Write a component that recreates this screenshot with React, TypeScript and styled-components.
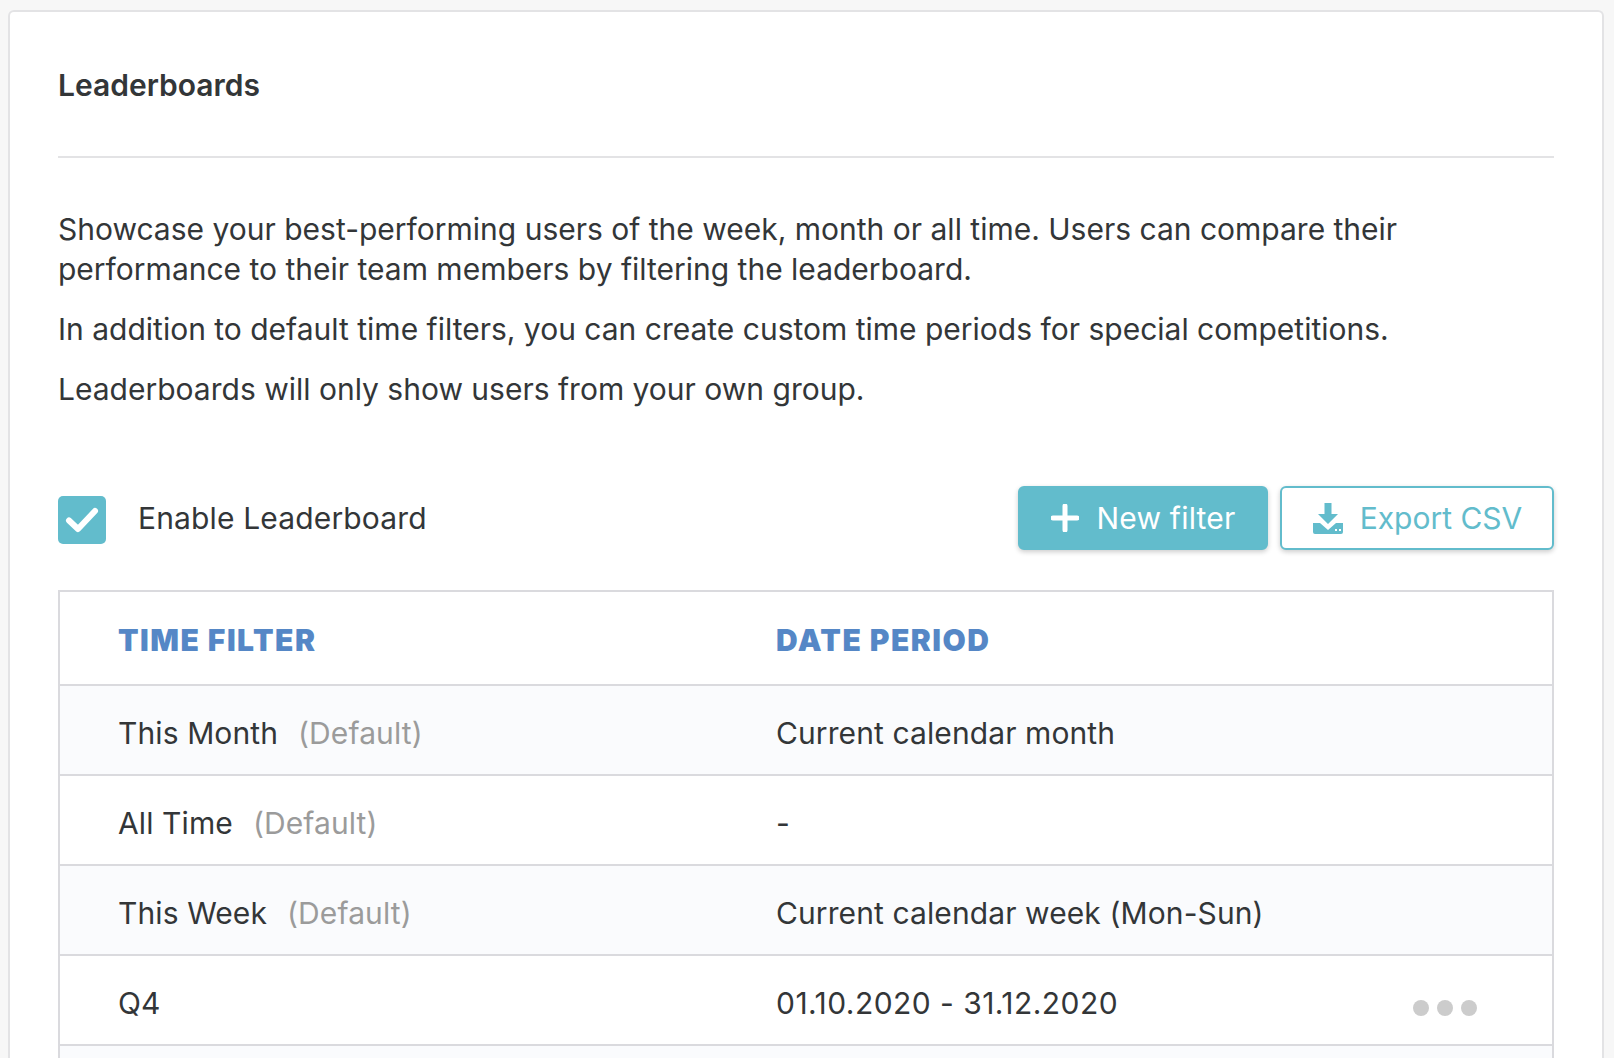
import styled, { createGlobalStyle } from "styled-components";

const GlobalStyle = createGlobalStyle`
    html, body {
        margin: 0;
        height: 1058px;
        overflow: hidden;
        background: #F7F7F7;
    }
    * {
        box-sizing: border-box;
    }
`

const Page = styled.div`
    padding: 10px 10px 0 8px;
    font-family: "Inter", "Liberation Sans", sans-serif;
    color: #333638;
`

const Card = styled.section`
    background: #FFFFFF;
    border: 2px solid #E3E3E5;
    border-bottom: 0;
    border-radius: 6px 6px 0 0;
    padding: 0 48px;
    height: 1048px;
    overflow: hidden;
`

const Title = styled.h1`
    margin: 0;
    height: 146px;
    padding-top: 53px;
    border-bottom: 2px solid #E3E3E5;
    font-size: 30px;
    line-height: 40px;
    font-weight: 600;
`

const Intro = styled.div`
    padding-top: 51px;
`

const Paragraph = styled.p`
    margin: 0 0 20px;
    font-size: 30px;
    line-height: 40px;
`

const Toolbar = styled.div`
    display: flex;
    align-items: center;
    justify-content: space-between;
    margin-top: 77px;
    height: 64px;
`

const EnableLabel = styled.label`
    display: flex;
    align-items: center;
    gap: 32px;
    font-size: 30px;
    letter-spacing: 0.15px;
`

const CheckBox = styled.span`
    display: flex;
    align-items: center;
    justify-content: center;
    width: 48px;
    height: 48px;
    margin-top: 4px;
    border-radius: 5px;
    background: #62BCCC;
`

const Actions = styled.div`
    display: flex;
    gap: 12px;
`

const Button = styled.button<{ $outline?: boolean }>`
    display: flex;
    align-items: center;
    justify-content: center;
    gap: ${(p) => (p.$outline ? "16px" : "18px")};
    height: 64px;
    width: ${(p) => (p.$outline ? "274px" : "250px")};
    border: 2px solid #62BCCC;
    border-radius: 6px;
    background: ${(p) => (p.$outline ? "#FFFFFF" : "#62BCCC")};
    color: ${(p) => (p.$outline ? "#62BCCC" : "#FFFFFF")};
    box-shadow: 0 2px 5px rgba(0, 0, 0, 0.2);
    font-family: inherit;
    font-size: 30px;
    letter-spacing: ${(p) => (p.$outline ? "0" : "0.2px")};
`

const Table = styled.div`
    margin-top: 40px;
    border: 2px solid #DADADE;
    border-bottom: 0;
`

const Row = styled.div<{ $striped?: boolean; $header?: boolean }>`
    display: grid;
    grid-template-columns: 658px 1fr;
    align-items: center;
    height: ${(p) => (p.$header ? "94px" : "90px")};
    padding: 6px 75px 0 58px;
    background: ${(p) => (p.$striped ? "#FAFBFD" : "#FFFFFF")};
    border-bottom: 2px solid #DADADE;
    font-size: 30px;
    letter-spacing: 0.1px;
`

const HeaderCell = styled.div`
    margin-top: -3px;
    color: #5587C6;
    font-weight: 900;
    letter-spacing: 1.5px;
    text-transform: uppercase;
`

const Cell = styled.div<{ $dates?: boolean }>`
    display: flex;
    align-items: center;
    justify-content: space-between;
    letter-spacing: ${(p) => (p.$dates ? "0.45px" : "inherit")};
`

const FilterName = styled.span`
    margin-right: 20px;
`

const DefaultTag = styled.span`
    color: #9B9B9B;
`

const Dots = styled.span`
    display: flex;
    gap: 8px;
    margin-top: 10px;
`

const Dot = styled.i`
    width: 16px;
    height: 16px;
    border-radius: 50%;
    background: #CCCCCC;
`

const rows = [
    { name: "This Month", isDefault: true, period: "Current calendar month" },
    { name: "All Time", isDefault: true, period: "-" },
    { name: "This Week", isDefault: true, period: "Current calendar week (Mon-Sun)" },
    { name: "Q4", isDefault: false, period: "01.10.2020 - 31.12.2020" },
]

const App = () => {
    return (
        <Page>
            <GlobalStyle />
            <Card>
                <Title>Leaderboards</Title>
                <Intro>
                    <Paragraph>
                        Showcase your best-performing users of the week, month or all time. Users can compare their performance to their team members by filtering the leaderboard.
                    </Paragraph>
                    <Paragraph>In addition to default time filters, you can create custom time periods for special competitions.</Paragraph>
                    <Paragraph>Leaderboards will only show users from your own group.</Paragraph>
                </Intro>
                <Toolbar>
                    <EnableLabel>
                        <CheckBox>
                            <svg width="34" height="28" viewBox="0 0 34 28" fill="none">
                                <path d="M4 14.5L13 23L30 5" stroke="#fff" strokeWidth="6" strokeLinecap="round" strokeLinejoin="round" />
                            </svg>
                        </CheckBox>
                        Enable Leaderboard
                    </EnableLabel>
                    <Actions>
                        <Button>
                            <svg width="28" height="28" viewBox="0 0 28 28" fill="none">
                                <path d="M14 2V26M2 14H26" stroke="#fff" strokeWidth="5" strokeLinecap="round" />
                            </svg>
                            New filter
                        </Button>
                        <Button $outline>
                            <svg width="32" height="32" viewBox="0 0 32 32">
                                <path d="M12.5 1H19.5V12H26L16 22L6 12H12.5Z" fill="#62BCCC" />
                                <path d="M1 21H8L16 28L24 21H31V30A2 2 0 0 1 29 32H3A2 2 0 0 1 1 30Z" fill="#62BCCC" />
                                <path d="M23 27H25V29H23ZM27 27H29V29H27Z" fill="#fff" />
                            </svg>
                            Export CSV
                        </Button>
                    </Actions>
                </Toolbar>
                <Table>
                    <Row $header>
                        <HeaderCell>Time filter</HeaderCell>
                        <HeaderCell>Date period</HeaderCell>
                    </Row>
                    {rows.map((row, i) => (
                        <Row key={i} $striped={i % 2 === 0}>
                            <div>
                                <FilterName>{row.name}</FilterName>
                                {row.isDefault && <DefaultTag>(Default)</DefaultTag>}
                            </div>
                            <Cell $dates={!row.isDefault}>
                                {row.period}
                                {!row.isDefault && (
                                    <Dots>
                                        <Dot />
                                        <Dot />
                                        <Dot />
                                    </Dots>
                                )}
                            </Cell>
                        </Row>
                    ))}
                    <Row $striped />
                </Table>
            </Card>
        </Page>
    )
}

export default App
